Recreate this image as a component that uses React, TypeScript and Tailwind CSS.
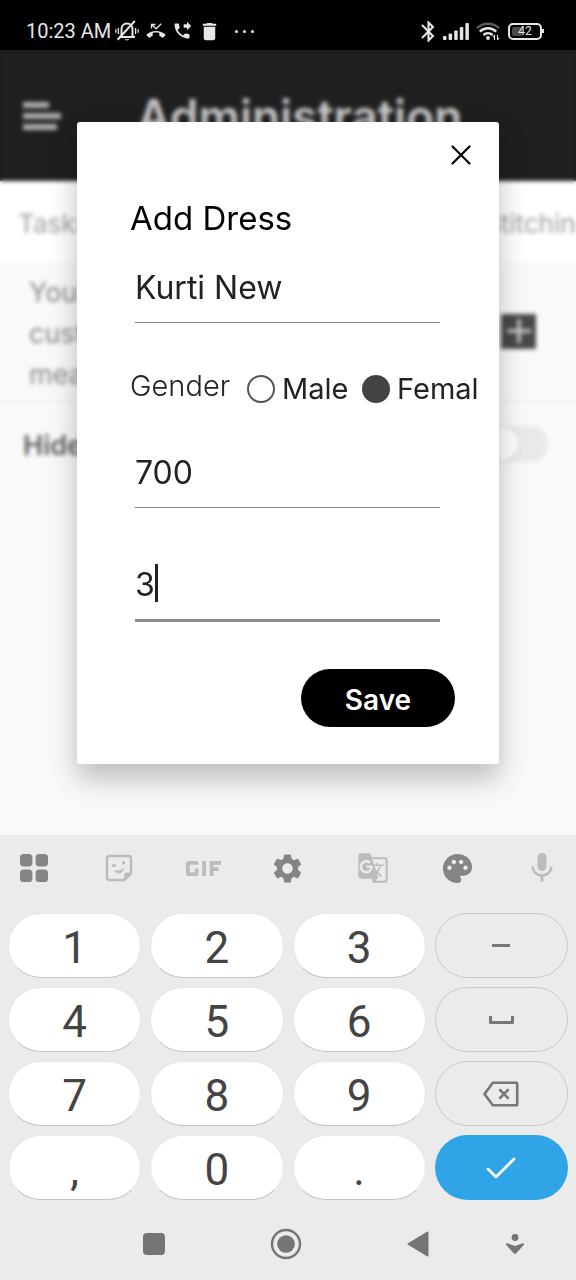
import React, { useState } from 'react';
import {
  MdBluetooth,
  MdDelete,
  MdGif,
  MdGTranslate,
  MdMic,
  MdPalette,
  MdPhoneForwarded,
  MdSettings,
} from 'react-icons/md';

type IconProps = { className?: string };

const MutedBell = ({ className }: IconProps) => (
  <svg viewBox="0 0 24 22" className={className} fill="none" stroke="currentColor" strokeWidth="2">
    <path d="M6.5 16.5V9.5C6.5 6 8.800 3.400 12 3.400S17.500 6 17.500 9.500v7" />
    <path d="M4 17h16M2.600 19.800 19.800 1" />
    <path d="M3.400 8v6M.9 9.200v3.600M20.600 8v6M23.100 9.200v3.600" strokeWidth="1.300" />
    <path d="M9.800 19.200h4.400c-.6 1.600-3.800 1.600-4.400 0Z" fill="currentColor" stroke="none" />
  </svg>
);

const MissedCall = ({ className }: IconProps) => (
  <svg viewBox="0 0 20 16" className={className} fill="none">
    <path d="M5.500 5.500V1.500h4M5.800 1.800l4.400 4 5-5" stroke="currentColor" strokeWidth="1.300" />
    <path
      d="M10 8c-3.600 0-6.800 1.300-9.300 3.500-.3.3-.3.7 0 1l2.200 2.100c.3.300.7.300 1 0 .7-.6 1.500-1.100 2.300-1.500.3-.1.500-.4.500-.8v-2.300c2.200-.6 4.500-.6 6.600 0v2.300c0 .4.200.7.500.8.900.4 1.600.9 2.300 1.500.3.300.7.300 1 0l2.200-2.100c.3-.3.3-.7 0-1C16.800 9.300 13.600 8 10 8Z"
      fill="currentColor"
    />
  </svg>
);

const Signal = ({ className }: IconProps) => (
  <svg viewBox="0 0 26 17" className={className} fill="currentColor">
    <rect x="0" y="13" width="3.500" height="4" rx="1" />
    <rect x="5.600" y="10.500" width="3.500" height="6.500" rx="1" />
    <rect x="11.200" y="7.500" width="3.500" height="9.500" rx="1" />
    <rect x="16.800" y="4" width="3.500" height="13" rx="1" />
    <rect x="22.400" y="0" width="3.500" height="17" rx="1" />
  </svg>
);

const Wifi = ({ className }: IconProps) => (
  <svg viewBox="0 0 24 18" className={className} fill="none" stroke="currentColor" strokeWidth="2.400">
    <path d="M.8 6.200c6.400-6 16-6 22.400 0" stroke="#5a5a5a" />
    <path d="M3.800 9.600c4.700-4.400 11.700-4.400 16.400 0M7.400 13c2.700-2.400 6.500-2.400 9.200 0" />
    <circle cx="12" cy="16" r="1.900" fill="currentColor" stroke="none" />
    <path d="M18.500 18v-4.500l-1.500 1.700M21.500 13v4.500l1.500-1.700" strokeWidth="1.100" />
  </svg>
);

const Apps = ({ className }: IconProps) => (
  <svg viewBox="0 0 28 28" className={className} fill="currentColor">
    <rect width="12.400" height="12.400" rx="3.600" />
    <rect x="15.600" width="12.400" height="12.400" rx="3.600" />
    <rect y="15.600" width="12.400" height="12.400" rx="3.600" />
    <rect x="15.600" y="15.600" width="12.400" height="12.400" rx="3.600" />
  </svg>
);

const Sticker = ({ className }: IconProps) => (
  <svg viewBox="0 0 28 28" className={className} fill="none" stroke="currentColor" strokeWidth="2.400">
    <path d="M4 2h20a2 2 0 0 1 2 2v15.500L19.500 26H4a2 2 0 0 1-2-2V4a2 2 0 0 1 2-2Z" />
    <path d="M26 19h-4.500a2 2 0 0 0-2 2v5Z" fill="currentColor" strokeWidth="1" />
    <path d="M10 16.500c3 1.300 6.500.5 8.500-2-.2 5-7.500 6-8.500 2Z" fill="currentColor" strokeWidth="1" />
    <path d="M7 11.500h4" strokeWidth="2.600" />
    <circle cx="18.600" cy="8.800" r="1.700" fill="currentColor" stroke="none" />
  </svg>
);

const Backspace = ({ className }: IconProps) => (
  <svg viewBox="0 0 36 26" className={className} fill="none" stroke="currentColor" strokeWidth="2.600" strokeLinejoin="round">
    <path d="M9.800 1.800h23.400a1 1 0 0 1 1 1v20.400a1 1 0 0 1-1 1H9.800L1.500 13Z" />
    <path d="m16.400 8.400 9.200 9.200m0-9.200-9.200 9.200" />
  </svg>
);

const fieldClass =
  'block h-14 w-full border-b border-[#868686] bg-transparent pb-[15px] text-[32px] leading-10 text-[#222] outline-none';

function StatusBar() {
  return (
    <div className="flex h-[50px] items-center bg-black pt-3 pr-[34px] pl-[26px] text-[#e6e6e6]">
      <span className="font-[Roboto] text-[20px] leading-6">10:23 AM</span>
      <MutedBell className="ml-1 h-[22px] w-6" />
      <MissedCall className="ml-[7px] h-4 w-5" />
      <MdPhoneForwarded className="ml-1.5 size-5" />
      <MdDelete className="ml-1.5 size-[23px]" />
      <span className="ml-3.5 flex gap-[5px]">
        <i className="size-[3px] rounded-full bg-current" />
        <i className="size-[3px] rounded-full bg-current" />
        <i className="size-[3px] rounded-full bg-current" />
      </span>
      <MdBluetooth className="ml-auto size-[25px]" />
      <Signal className="ml-0.5 h-[17px] w-[26px]" />
      <Wifi className="ml-[7px] h-[18px] w-6" />
      <span className="relative ml-2 flex h-[17px] w-[34px] items-center justify-center rounded-[5px] border-2 border-current">
        <i className="absolute inset-y-[2px] left-[2px] w-2.5 rounded-l-[2px] bg-[#4a4a4a]" />
        <span className="relative font-[Roboto] text-[12px] leading-3">42</span>
        <i className="absolute -right-1 h-1 w-[2px] bg-current" />
      </span>
    </div>
  );
}

function AdminPage() {
  return (
    <>
      <header className="flex h-[131px] items-center bg-[#1f1f1f] pl-[23px] text-[#c8c8c8]">
        <button aria-label="Menu" className="flex w-[38px] flex-col gap-[5px]">
          <i className="h-1.5 w-[26px] bg-[#b0b0b0]" />
          <i className="h-1.5 w-[38px] bg-[#b0b0b0]" />
          <i className="h-1.5 w-[34px] bg-[#b0b0b0]" />
        </button>
        <h1 className="ml-[76px] text-[46px] leading-[52px] font-semibold">Administration</h1>
      </header>
      <nav className="flex h-[81px] items-center justify-between overflow-hidden bg-white pt-1 pl-[18px] text-[26px] text-[#a2a2a2]">
        <a href="#tasks">Tasks</a>
        <a href="#stitching" className="w-[92px] whitespace-nowrap">Stitching</a>
      </nav>
      <section className="flex h-[140px] items-center justify-between border-b-2 border-[#f1f1f1] pr-10 pl-[29px]">
        <p className="pt-1 text-[27px] leading-[41px] text-[#8a8a8a]">
          You can
          <br />
          custom
          <br />
          meas
        </p>
        <button aria-label="Add" className="flex size-[35px] items-center justify-center bg-[#484848]">
          <svg viewBox="0 0 24 24" className="size-6" stroke="#ccc" strokeWidth="3.500">
            <path d="M12 0v24M0 12h24" />
          </svg>
        </button>
      </section>
      <label className="flex h-[84px] items-center justify-between pr-7 pl-[23px] text-[27px] font-semibold text-[#606060]">
        <span className="pt-1">Hide</span>
        <span className="flex h-9 w-[72px] items-center rounded-full bg-[#e9e9e9] pl-2">
          <input type="checkbox" className="size-[34px] appearance-none rounded-full bg-white shadow-sm" />
        </span>
      </label>
    </>
  );
}

function AddDressDialog() {
  const [name, setName] = useState('Kurti New');
  const [gender, setGender] = useState('female');
  const [price, setPrice] = useState('700');
  const [days, setDays] = useState('3');

  const radioClass =
    'size-7 shrink-0 appearance-none rounded-full border-2 border-[#555] checked:border-[#444] checked:bg-[#444]';

  return (
    <div role="dialog" className="flex flex-col overflow-hidden rounded-[3px] bg-white pt-3 pb-[37px] shadow-[0_14px_28px_rgba(0,0,0,0.25)]">
      <button aria-label="Close" className="mr-[18px] flex size-10 items-center justify-center self-end">
        <svg viewBox="0 0 20 20" className="mt-0.5 size-5" stroke="#000" strokeWidth="2.200" strokeLinecap="round">
          <path d="m1.500 1.500 17 17m0-17-17 17" />
        </svg>
      </button>
      <h2 className="mt-6 pl-[53px] text-[33px] leading-10 text-black">Add Dress</h2>
      <div className="mt-[29px] pr-[59px] pl-[58px]">
        <input aria-label="Dress name" className={fieldClass} value={name} onChange={(e) => setName(e.target.value)} />
      </div>
      <fieldset className="mt-[43px] flex h-10 items-center pl-[53px] text-[29px] leading-10 whitespace-nowrap text-[#222]">
        <span className="w-[117px] pb-1.5 font-light">Gender</span>
        <label className="flex w-[115px] items-center gap-[7px]">
          <input type="radio" name="gender" className={radioClass} checked={gender === 'male'} onChange={() => setGender('male')} />
          Male
        </label>
        <label className="flex items-center gap-[7px]">
          <input type="radio" name="gender" className={radioClass} checked={gender === 'female'} onChange={() => setGender('female')} />
          Femal
        </label>
      </fieldset>
      <div className="mt-[46px] pr-[59px] pl-[58px]">
        <input aria-label="Price" className={fieldClass} value={price} onChange={(e) => setPrice(e.target.value)} />
        <div className="relative mt-[56px] border-b-2 border-[#8c8c8c]">
          <input aria-label="Days" className={fieldClass} value={days} onChange={(e) => setDays(e.target.value)} />
          {/* thick caret */}
          <i className="absolute top-0 left-5 h-[38px] w-[3px] bg-[#222]" />
        </div>
      </div>
      <button className="mt-[47px] mr-11 h-[58px] w-[154px] self-end rounded-full bg-black pt-1 text-[28px] font-semibold text-white">
        Save
      </button>
    </div>
  );
}

const actionKeyClass =
  'flex h-[65px] items-center justify-center rounded-full border border-[#c9c9c9] text-[#777]';

function DigitKeys({ keys }: { keys: string[] }) {
  return (
    <>
      {keys.map((k) => (
        <button
          key={k}
          className="h-[65px] rounded-full border border-[#e6e6e6] border-b-[#c4c4c4] bg-white pt-1 font-[Roboto] text-[44px] leading-[60px] text-[#444]"
        >
          {k}
        </button>
      ))}
    </>
  );
}

function Keyboard() {
  return (
    <div className="bg-[#ebebeb]">
      <div className="mb-3 flex h-[66px] items-center justify-between px-5 text-[#bcbcbc] *:flex *:w-7 *:justify-center [&_svg]:shrink-0">
        <button aria-label="Apps"><Apps className="size-7 text-[#858585]" /></button>
        <button aria-label="Stickers"><Sticker className="size-7" /></button>
        <button aria-label="GIF"><MdGif viewBox="5 9 14 6" className="h-[15px] w-[35px]" /></button>
        <button aria-label="Settings"><MdSettings className="size-[35px] text-[#858585]" /></button>
        <button aria-label="Translate"><MdGTranslate className="size-8" /></button>
        <button aria-label="Themes"><MdPalette className="size-[35px] text-[#858585]" /></button>
        <button aria-label="Voice"><MdMic className="size-9" /></button>
      </div>
      <div className="grid grid-cols-4 gap-[9px] px-2">
        <DigitKeys keys={['1', '2', '3']} />
        <button aria-label="Minus" className={actionKeyClass}>
          <i className="h-[3px] w-[18px] bg-current" />
        </button>
        <DigitKeys keys={['4', '5', '6']} />
        <button aria-label="Space" className={actionKeyClass}>
          <i className="h-2 w-[25px] rounded-b-[2px] border-3 border-t-0 border-current" />
        </button>
        <DigitKeys keys={['7', '8', '9']} />
        <button aria-label="Backspace" className={actionKeyClass}>
          <Backspace className="h-[26px] w-9" />
        </button>
        <DigitKeys keys={[',', '0', '.']} />
        <button aria-label="Done" className="flex h-[65px] items-center justify-center rounded-full bg-[#2fa5e7]">
          <svg viewBox="0 0 30 22" className="h-[22px] w-[30px]" fill="none" stroke="#fff" strokeWidth="2.800" strokeLinecap="round" strokeLinejoin="round">
            <path d="m2 12 8 8L28 2" />
          </svg>
        </button>
      </div>
      <div className="flex h-20 items-center pt-2 pr-[30px] pl-[88px] text-[#757575] *:flex *:justify-center">
        <button aria-label="Recents" className="flex-1"><i className="size-[22px] rounded-[4px] bg-current" /></button>
        <button aria-label="Home" className="flex-1">
          <svg viewBox="0 0 32 32" className="size-8">
            <circle cx="16" cy="16" r="14" fill="none" stroke="currentColor" strokeWidth="2.400" />
            <circle cx="16" cy="16" r="8.800" fill="currentColor" />
          </svg>
        </button>
        <button aria-label="Back" className="flex-1">
          <svg viewBox="0 0 22 26" className="h-[26px] w-[22px]" fill="currentColor" stroke="currentColor" strokeWidth="2" strokeLinejoin="round">
            <path d="M20.500 1.500v23L1.500 13Z" />
          </svg>
        </button>
        <button aria-label="Hide keyboard" className="w-[62px]">
          <svg viewBox="0 0 20 22" className="h-[22px] w-5" fill="currentColor">
            <circle cx="10" cy="4.500" r="3.400" />
            <path d="M2.200 10.200 10 13l7.800-2.800c1.100-.2 1.600 1 .9 1.900L11 20.600c-.6.600-1.400.6-2 0L1.300 12.100c-.7-.9-.2-2.100.9-1.900Z" />
          </svg>
        </button>
      </div>
    </div>
  );
}

export default function App() {
  return (
    <div className="flex min-h-screen flex-col bg-[#f9f9f9] font-[Inter,sans-serif]">
      <StatusBar />
      <main className="relative flex-1 overflow-hidden">
        <AdminPage />
        <div className="absolute inset-0 px-[77px] pt-[72px] backdrop-blur-[2px]">
          <AddDressDialog />
        </div>
      </main>
      <Keyboard />
    </div>
  );
}
